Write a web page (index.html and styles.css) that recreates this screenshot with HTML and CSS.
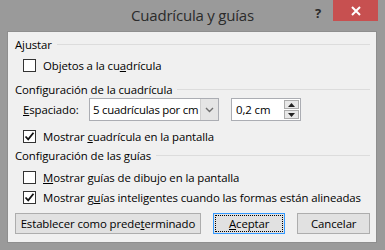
FILE: index.html
```html
<!DOCTYPE html>
<html lang="es">

<head>
    <meta charset="UTF-8">
    <meta name="viewport" content="width=device-width, initial-scale=1.0">
    <title>Cuadrícula y guías</title>
    <link rel="stylesheet" href="styles.css">
</head>

<body>
    <div class="window">
        <div class="titlebar">
            <div class="title">Cuadrícula y guías</div>
            <div class="help">?</div>
            <div class="close">
                <svg width="10" height="10" viewBox="0 0 10 10">
                    <path d="M1 1 L9 9 M9 1 L1 9" stroke="#ffffff" stroke-width="2" />
                </svg>
            </div>
        </div>

        <div class="client">
            <div class="group-title"><span>Ajustar</span></div>
            <label class="check row-snap">
                <span class="box"></span>
                <span>Objetos a la cu<u>a</u>drícula</span>
            </label>

            <div class="group-title gap-group"><span>Configuración de la cuadrícula</span></div>
            <div class="spacing-row">
                <span class="field-label"><u>E</u>spaciado:</span>
                <div class="select">
                    <span class="select-text">5 cuadrículas por cm</span>
                    <span class="select-btn">
                        <svg width="9" height="6" viewBox="0 0 9 6">
                            <path d="M1 1 L4.5 4.5 L8 1" fill="none" stroke="#707070" stroke-width="1.4" />
                        </svg>
                    </span>
                </div>
                <div class="spin">
                    <span class="spin-text">0,2 cm</span>
                    <span class="spin-btns">
                        <span class="spin-btn">
                            <svg width="7" height="4" viewBox="0 0 7 4"><path d="M0 4 L3.5 0 L7 4 Z" fill="#222" /></svg>
                        </span>
                        <span class="spin-btn">
                            <svg width="7" height="4" viewBox="0 0 7 4"><path d="M0 0 L3.5 4 L7 0 Z" fill="#222" /></svg>
                        </span>
                    </span>
                </div>
            </div>
            <label class="check row-grid">
                <span class="box checked">
                    <svg width="11" height="11" viewBox="0 0 11 11">
                        <path d="M1.5 5.5 L4.2 8.3 L9.5 1.8" fill="none" stroke="#111" stroke-width="1.8" />
                    </svg>
                </span>
                <span>Mostrar <u>c</u>uadrícula en la pantalla</span>
            </label>

            <div class="group-title gap-guides"><span>Configuración de las guías</span></div>
            <label class="check row-draw">
                <span class="box"></span>
                <span><u>M</u>ostrar guías de dibujo en la pantalla</span>
            </label>
            <label class="check row-smart">
                <span class="box checked">
                    <svg width="11" height="11" viewBox="0 0 11 11">
                        <path d="M1.5 5.5 L4.2 8.3 L9.5 1.8" fill="none" stroke="#111" stroke-width="1.8" />
                    </svg>
                </span>
                <span>Mostrar g<u>u</u>ías inteligentes cuando las formas están alineadas</span>
            </label>

            <div class="buttons">
                <div class="button btn-default">Establecer como prede<u>t</u>erminado</div>
                <div class="button btn-ok"><span class="focus"><u>A</u>ceptar</span></div>
                <div class="button btn-cancel">Cancelar</div>
            </div>
        </div>
    </div>
</body>

</html>
```

FILE: styles.css
```css
:root {
    --frame-color: #9a9a9a;
    --client-color: #f0f0f0;
    --text-color: #000000;
    --line-color: #dcdcdc;
    --field-border: #abadb3;
    --close-color: #c75050;
}

body * {
    font-family: "Open Sans", "Noto Sans", sans-serif;
    box-sizing: border-box;
}

body {
    margin: 0;
    width: 385px;
    height: 250px;
    background-color: var(--frame-color);
    overflow: hidden;
}

.window {
    display: flex;
    flex-direction: column;
    height: 250px;
}

.titlebar {
    position: relative;
    height: 31px;
    display: flex;
    justify-content: center;
}

.title {
    font-size: 15px;
    color: #2b2b2b;
    line-height: 31px;
    letter-spacing: -0.2px;
}

.help {
    position: absolute;
    left: 315px;
    top: 4px;
    font-size: 13px;
    font-weight: 700;
    color: #2b2b2b;
}

.close {
    position: absolute;
    left: 333px;
    top: 0;
    width: 45px;
    height: 21px;
    background-color: var(--close-color);
    display: flex;
    align-items: center;
    justify-content: center;
}

.client {
    margin: 0 8px 0 7px;
    height: 212px;
    background-color: var(--client-color);
    border: 1px solid #8e8e8e;
    padding: 4px 6px 0 7px;
    display: flex;
    flex-direction: column;
    font-size: 11.4px;
    letter-spacing: -0.1px;
    color: var(--text-color);
}

.group-title {
    display: flex;
    align-items: center;
    gap: 5px;
    height: 16px;
    white-space: nowrap;
}

.group-title::after {
    content: "";
    flex: 1;
    height: 1px;
    background-color: var(--line-color);
}

.gap-group {
    margin-top: 8px;
}

.gap-guides {
    margin-top: 3px;
}

.check {
    display: flex;
    align-items: center;
    gap: 7px;
    height: 16px;
    padding-left: 8px;
    white-space: nowrap;
}

.row-snap {
    margin-top: 5px;
}

.row-grid {
    margin-top: 7px;
}

.row-draw {
    margin-top: 6px;
}

.row-smart {
    margin-top: 4px;
}

.box {
    width: 13px;
    height: 13px;
    border: 1px solid #333333;
    background: #ffffff;
    display: flex;
    align-items: center;
    justify-content: center;
    flex-shrink: 0;
}

.spacing-row {
    display: flex;
    align-items: center;
    height: 23px;
    margin-top: 1px;
    padding-left: 8px;
}

.field-label {
    width: 66px;
}

.select {
    display: flex;
    width: 130px;
    height: 23px;
    border: 1px solid var(--field-border);
    background: #ffffff;
}

.select-text {
    flex: 1;
    padding-left: 3px;
    line-height: 21px;
    white-space: nowrap;
    letter-spacing: -0.25px;
}

.select-btn {
    width: 18px;
    background: #e5e5e5;
    border-left: 1px solid #cfcfcf;
    display: flex;
    align-items: center;
    justify-content: center;
}

.spin {
    display: flex;
    margin-left: 12px;
    width: 70px;
    height: 23px;
    border: 1px solid var(--field-border);
    background: #ffffff;
}

.spin-text {
    flex: 1;
    padding-left: 4px;
    line-height: 21px;
}

.spin-btns {
    width: 16px;
    display: flex;
    flex-direction: column;
    gap: 1px;
    padding: 1px 1px 1px 0;
}

.spin-btn {
    flex: 1;
    background: #e8e8e8;
    border: 1px solid #acacac;
    display: flex;
    align-items: center;
    justify-content: center;
}

.buttons {
    display: flex;
    margin-top: 8px;
    gap: 12px;
}

.button {
    height: 21px;
    border: 1px solid #adadad;
    background: #e1e1e1;
    display: flex;
    align-items: center;
    justify-content: center;
    white-space: nowrap;
}

.btn-default {
    width: 187px;
}

.btn-ok {
    width: 73px;
    border-color: #3399ff;
    padding: 1px;
}

.btn-ok .focus {
    flex: 1;
    align-self: stretch;
    border: 1px dotted #000000;
    display: flex;
    align-items: center;
    justify-content: center;
}

.btn-cancel {
    width: 73px;
}
```
